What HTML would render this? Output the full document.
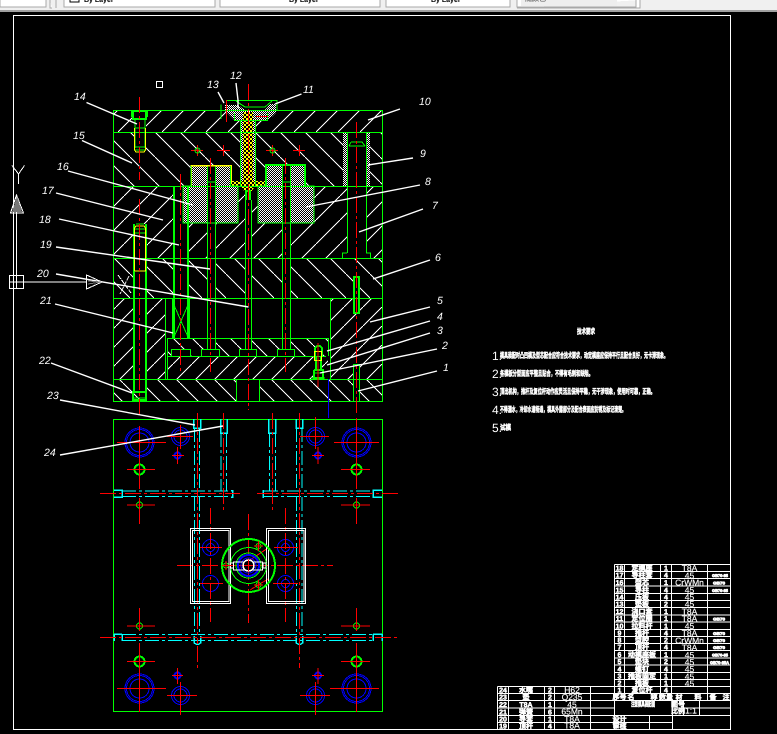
<!DOCTYPE html>
<html><head><meta charset="utf-8"><style>
html,body{margin:0;padding:0;background:#000;width:777px;height:734px;overflow:hidden}
svg{display:block}
.g{fill:none;stroke:#0f0;stroke-width:1}
.G{fill:none;stroke:#0f0;stroke-width:2}
.y{fill:none;stroke:#ff0;stroke-width:1}
.w{fill:none;stroke:#fff;stroke-width:1}
.W{fill:none;stroke:#fff;stroke-width:1.4;shape-rendering:auto}
.r{fill:none;stroke:#f00;stroke-width:1;stroke-dasharray:16 3 3 3}
.rs{fill:none;stroke:#f00;stroke-width:1}
.b{fill:none;stroke:#00f;stroke-width:1}
.c{fill:none;stroke:#0ff;stroke-width:1;stroke-dasharray:14 3 3 3}
.cs{fill:none;stroke:#0ff;stroke-width:1.5}
text{fill:#fff;text-rendering:geometricPrecision}
.n{font:italic 10.5px "Liberation Sans",sans-serif}
.t{font:bold 7px "Liberation Sans","Noto Sans CJK SC",sans-serif;stroke:#fff;stroke-width:.5;text-anchor:middle}
.m{font:8.5px "Liberation Sans",sans-serif;text-anchor:middle;stroke:#fff;stroke-width:.15}
.s{font:bold 4px "Liberation Sans",sans-serif;stroke:#fff;stroke-width:.7}
.p{font:bold 7.5px "Liberation Sans","Noto Sans CJK SC",sans-serif;stroke:#fff;stroke-width:.5}
.d{font:12px "Liberation Sans",sans-serif}
.tb{font:bold 7px "Liberation Sans",sans-serif;fill:#000}
</style></head><body>
<svg width="777" height="734" viewBox="0 0 777 734" xmlns="http://www.w3.org/2000/svg" shape-rendering="crispEdges">
<defs>
<pattern id="a" width="22" height="22" patternUnits="userSpaceOnUse" x="8" y="0"><path d="M0 22L22 0" stroke="#fff" fill="none"/></pattern>
<pattern id="b" width="25" height="25" patternUnits="userSpaceOnUse" x="5" y="7"><path d="M0 0L25 25" stroke="#fff" fill="none"/></pattern>
<pattern id="c" width="24" height="24" patternUnits="userSpaceOnUse" x="4" y="4"><path d="M0 24L24 0" stroke="#fff" fill="none"/></pattern>
<pattern id="d" width="24" height="24" patternUnits="userSpaceOnUse" x="10" y="10"><path d="M0 0L24 24" stroke="#fff" fill="none"/></pattern>
<pattern id="e" width="19" height="19" patternUnits="userSpaceOnUse" x="2" y="3"><path d="M0 19L19 0" stroke="#fff" fill="none"/></pattern>
<pattern id="f" width="19" height="19" patternUnits="userSpaceOnUse" x="9" y="3"><path d="M0 0L19 19" stroke="#fff" fill="none"/></pattern>
<pattern id="st" width="2" height="2" patternUnits="userSpaceOnUse"><rect width="2" height="2" fill="#000"/><rect width="1" height="1" fill="#fff"/><rect x="1" y="1" width="1" height="1" fill="#fff"/></pattern>
<pattern id="sy" width="4" height="4" patternUnits="userSpaceOnUse"><rect width="4" height="4" fill="#000"/><rect width="2" height="2" fill="#ff0"/><rect x="2" y="2" width="2" height="2" fill="#ff0"/></pattern>
</defs>
<rect width="777" height="734" fill="#000"/>
<!-- top toolbar -->
<rect width="777" height="10" fill="#f0f0f0"/><rect y="10" width="777" height="2" fill="#a0a0a0"/>
<path d="M0 0V7H46V0M50 0V8H52M56 0V8M64 0V7H215V0M220 0V7H380V0M386 0V7H510V0M517 0V7H636V0M640 0V8H517" fill="#fff" stroke="#a8a8a8"/>
<rect x="521" y="0" width="96" height="6" fill="#eee"/>
<rect x="70" y="-3" width="9" height="5" fill="#fff" stroke="#000"/>
<text class="tb" x="84" y="2">By Layer</text><text class="tb" x="289" y="2">By Layer</text><text class="tb" x="431" y="2">By Layer</text><text class="tb" x="525" y="1" style="fill:#777">随颜色</text>
<!-- frame -->
<path class="w" d="M730.5 15.5H13.5V729.5H730.5Z"/>
<!-- hatches section -->
<rect x="114" y="111" width="268" height="21" fill="url(#a)"/>
<rect x="114" y="133" width="268" height="53" fill="url(#b)"/>
<rect x="114" y="187" width="268" height="71" fill="url(#c)"/>
<rect x="114" y="259" width="268" height="39" fill="url(#d)"/>
<rect x="114" y="299" width="52" height="80" fill="url(#e)"/>
<rect x="330" y="299" width="52" height="80" fill="url(#e)"/>
<rect x="168" y="339" width="160" height="17" fill="url(#f)"/>
<rect x="168" y="357" width="160" height="22" fill="url(#e)"/>
<rect x="114" y="380" width="268" height="21" fill="url(#f)"/>
<!-- voids -->
<g fill="#000">
<rect x="134" y="111" width="12" height="40"/><rect x="134" y="224" width="12" height="168"/>
<rect x="174" y="186" width="14" height="152"/><rect x="207" y="165" width="8" height="184"/>
<rect x="245" y="186" width="6" height="164"/><rect x="282" y="165" width="8" height="184"/>
<rect x="347" y="133" width="19" height="125"/>
<rect x="188" y="299" width="142" height="39"/>
<rect x="172" y="349" width="19" height="7"/><rect x="201" y="349" width="19" height="7"/><rect x="239" y="349" width="18" height="7"/><rect x="277" y="349" width="18" height="7"/>
<rect x="237" y="380" width="23" height="21"/>
<rect x="354" y="277" width="6" height="36"/><rect x="354" y="364" width="6" height="37"/>
<rect x="315" y="346" width="7" height="32"/>
</g>
<!-- inserts stipple -->
<path d="M191 165H231V186H238V223H183V186H191Z" fill="url(#st)"/>
<path d="M266 165H305V186H314V223H258V186H266Z" fill="url(#st)"/>
<rect x="207" y="165" width="8" height="58" fill="#000"/><rect x="282" y="165" width="8" height="58" fill="#000"/>
<rect x="343" y="133" width="4" height="53" fill="url(#st)"/><rect x="366" y="133" width="4" height="53" fill="url(#st)"/>
<!-- sprue -->
<rect x="240" y="120" width="16" height="66" fill="url(#st)"/>
<path d="M225 105H238L245 110H265L270 104H276V113L268 120H234L225 111Z" fill="url(#st)"/>
<rect x="243" y="112" width="10" height="70" fill="url(#sy)"/>
<path d="M230 181H244V176H253V181H266V186H255L252 191H244L241 186H230Z" fill="url(#sy)"/>
<!-- green structure -->
<rect class="g" x="113.5" y="110.5" width="269" height="291"/>
<path class="g" d="M113 132.5H382M113 186.5H382M113 258.5H382M113 298.5H382M113 379.5H382M168 338.5H328M168 356.5H326M165.5 298V379M167.5 338V379M330.5 298V379M328.5 338V356"/>
<path class="G" d="M174 186V338M188 186V338M134 224V392M146 224V392"/>
<path class="g" d="M207.5 165V349M215.5 165V349M245.5 200V349M251.5 200V349M282.5 165V349M290.5 165V349M347.5 133V253M366.5 133V253M342.5 258V253H347M370.5 258V253H366M349 146H365M351 142H362L365 146M349 146L351 142"/>
<path class="g" d="M240.5 120V186M255.5 120V186M234.5 113V120.5H267.5V113M221 104.5V119M226 100.5H277V110M236 101L245 107H265L272 101"/>
<path class="G" d="M246 200V190M250 200V190M246 191H251"/>
<path class="g" d="M172.5 298.5V338M189.5 298.5V338M174 305L188 337M188 305L174 337"/>
<rect class="g" x="171.5" y="349.5" width="19" height="7"/><rect class="g" x="201.5" y="349.5" width="18" height="7"/><rect class="g" x="239.5" y="349.5" width="17" height="7"/><rect class="g" x="277.5" y="349.5" width="17" height="7"/>
<rect class="g" x="236.5" y="379.5" width="23" height="22"/>
<rect class="G" x="354" y="277" width="5" height="36"/><rect class="g" x="353.5" y="364.5" width="6" height="37"/>
<!-- bolts -->
<path class="G" d="M133 111H146V119H133Z"/><path class="g" d="M131.5 111V117M147.5 111V117M135 120V128H145V120M135 128V148M145 128V148M135 147H145M135 150H145"/>
<path class="y" d="M134.5 128V150L136 152H144L145.5 150V128"/>
<path class="y" d="M134.5 271V228L136 226H144L145.5 228V271H134.5"/>
<path class="g" d="M135 233H145M135 229H145M136 224H144"/>
<path class="G" d="M133 392H146V400H133Z"/>
<path class="g" d="M132 398H147"/>
<path class="G" d="M315 356V348L317 346H320L322 348V356M314 370V378H323V370H314M316 356V370M321 356V370"/>
<rect class="y" x="314.5" y="351.5" width="7" height="9"/>
<path class="g" d="M311 378H325M314 373H323"/>
<!-- insert outlines -->
<path class="G" d="M266 186V165H305V186"/>
<path class="g" d="M191 186H183V223H238V186H231M258 186V223H314V186H305M266 186H258"/>
<path class="y" d="M191 186V165.5H231V182" style="stroke-width:1.5"/>
<path class="g" d="M191 186V166M230.5 166V186M207 182H215M282 182H290"/>
<!-- section red -->
<path class="r" d="M139.5 97V180M139.5 199V418M180.5 174V372M210.5 158V372M248.5 84V410M285.5 158V372M356.5 122V413"/>
<path class="rs" d="M318 343V387M226.5 100V122M256 116.5H268M191 150.5H203M197.5 145V156M217 150.5H230M223.5 145V156M266 150.5H278M272.5 145V156M293 150.5H305M299.5 145V156"/>
<circle class="g" cx="197.5" cy="150.5" r="2.5"/><circle class="g" cx="272.5" cy="150.5" r="2.5"/>
<path d="M328.5 379V418" stroke="#00f" fill="none"/>
<!-- plan view -->
<rect class="g" x="113.5" y="419.5" width="269" height="292"/>
<g class="b">
<circle cx="139.5" cy="442.5" r="14.5"/><circle cx="139.5" cy="442.5" r="13"/><circle cx="139.5" cy="442.5" r="9.5"/>
<circle cx="356.5" cy="442.5" r="14.5"/><circle cx="356.5" cy="442.5" r="13"/><circle cx="356.5" cy="442.5" r="9.5"/>
<circle cx="139.5" cy="688.5" r="14.5"/><circle cx="139.5" cy="688.5" r="13"/><circle cx="139.5" cy="688.5" r="9.5"/>
<circle cx="356.5" cy="688.5" r="14.5"/><circle cx="356.5" cy="688.5" r="13"/><circle cx="356.5" cy="688.5" r="9.5"/>
<circle cx="180.5" cy="436.5" r="9"/><circle cx="180.5" cy="436.5" r="6.5"/><circle cx="315.5" cy="436.5" r="9"/><circle cx="315.5" cy="436.5" r="6.5"/>
<circle cx="180.5" cy="695.5" r="9"/><circle cx="180.5" cy="695.5" r="6.5"/><circle cx="315.5" cy="695.5" r="9"/><circle cx="315.5" cy="695.5" r="6.5"/>
<circle cx="210.5" cy="547.5" r="8"/><circle cx="210.5" cy="547.5" r="4"/><circle cx="285.5" cy="547.5" r="8"/><circle cx="285.5" cy="547.5" r="4"/>
<circle cx="210.5" cy="583.5" r="8"/><circle cx="285.5" cy="583.5" r="8"/><circle cx="285.5" cy="583.5" r="4"/>
</g>
<g fill="none" stroke="#00f" stroke-width="2"><circle cx="177.5" cy="455.5" r="3"/><circle cx="318" cy="455.5" r="3"/><circle cx="177.5" cy="675.5" r="3"/><circle cx="318" cy="675.5" r="3"/></g>
<g class="G"><circle cx="139.5" cy="469.5" r="5"/><circle cx="356.5" cy="469.5" r="5"/><circle cx="139.5" cy="661.5" r="5"/><circle cx="356.5" cy="661.5" r="5"/></g>
<g class="g"><circle cx="139.5" cy="505" r="3"/><circle cx="356.5" cy="505" r="3"/><circle cx="139.5" cy="626" r="3"/><circle cx="356.5" cy="626" r="3"/></g>
<!-- cyan -->
<path class="c" d="M122 491H231M122 496.5H231M264 491H373M264 496.5H373M122 634.5H373M122 640.5H373M194.5 428V491M199.5 428V491M194.5 497V634M199.5 497V634M296.5 428V491M302 428V491M296.5 497V634M302 497V634M221 433V491M226.5 433V491M269.5 433V491M275.5 433V491"/>
<path class="cs" d="M114 490H122V497H114M382 490H373V497H382M114 634V641M122 634V641M114 634H122M382 634V641M373 634V641M373 634H382M193.5 419V428H200.5V419M220.5 419V433H227V419M268.5 419V433H275.5V419M296 419V428H302.5V419M231 490.5H232.5V497H231M264 490.5H263V497H264M194 636V643L196 644H199L200.5 643V636M296 636V643L298 644H301L302.5 643V636"/>
<!-- red plan -->
<path class="r" d="M100 493.5H240M257 493.5H400M100 637.5H398M177 565.5H333M197.5 413V644M223.5 413V510M272.5 413V510M299.5 413V668M210.5 508V622M285.5 508V622M248.5 514V623M197.5 646V668"/>
<path class="rs" d="M117 442.5H166M139.5 426V488M334 442.5H379M356.5 418V488M117 688.5H166M139.5 672V712M330 688.5H379M356.5 672V712M167 436.5H193M180.5 425V449M300 436.5H329M315.5 417V449M172 455.5H184M177.5 447V464M312 455.5H324M318 447V464M172 675.5H183M177.5 668V684M312 675.5H324M318 668V684M167 695.5H197M180.5 682V715M300 695.5H330M315.5 682V715M127 469.5H155M139.5 460V489M341 469.5H370M356.5 460V489M127 505H155M139.5 498V524M341 505H370M356.5 498V524M127 626H155M139.5 608V631M341 626H370M356.5 608V631M127 661.5H155M139.5 643V672M341 661.5H370M356.5 643V672M200 547.5H222M274 547.5H298M200 583.5H223M273 583.5H298M250 560L268 548M250 590L268 579"/>
<!-- white insert rects -->
<g class="w" style="stroke-width:1"><rect x="190.5" y="528.5" width="40" height="75"/><rect x="192.5" y="530.5" width="36.5" height="71"/><rect x="266.5" y="528.5" width="39" height="75"/><rect x="268.5" y="530.5" width="35.5" height="71"/></g>
<g fill="none">
<circle cx="248.5" cy="565.5" r="26.5" stroke="#0f0" stroke-width="2"/>
<circle cx="248.5" cy="565.5" r="18" stroke="#0f0"/>
<circle cx="248.5" cy="565.5" r="12.5" stroke="#0f0"/>
<circle cx="248.5" cy="565.5" r="10.5" stroke="#00f" stroke-width="2"/>
<circle cx="248.5" cy="565.5" r="7.5" stroke="#00f"/>
</g>
<rect x="233.5" y="562" width="29" height="8" fill="none" stroke="#fff" stroke-width="1"/>
<rect x="230.5" y="563" width="3" height="5" fill="none" stroke="#fff"/><rect x="263" y="563" width="3" height="5" fill="none" stroke="#fff"/>
<circle cx="248.5" cy="565.5" r="5.5" fill="#000" stroke="#fff" stroke-width="1.5"/>
<circle cx="226" cy="565.5" r="2.5" class="g"/><circle cx="258.5" cy="546" r="2.5" class="g"/><circle cx="258.5" cy="585" r="2.5" class="g"/>
<path class="rs" d="M222 565.5H231M226 561V570M254 546H263M258.5 541V551M254 585H263M258.5 580V590M244 565.5H253M248.5 560V571"/>
<!-- leaders -->
<g class="W">
<path d="M86.5 102.5L137 124M82 140.5L132 163M68 171L193 205M56 193L163 220M59 219L179 245M56 247L210 269M56 274L248.5 307M55 304L173 333M51 363L132 393M60 400L195 425M60 455L223 426"/>
<path d="M301.5 94L275 104M400 109L368 120M413 158L368 165M420 185L306 207M423 209L359 232M430 260L373 279M430 307L370 322M430 321L327 351M430 333L327 365M437 349L320 373M437 371L358 391M218 92L224 103M236 83L238 100L238 108"/>
</g>
<g class="n">
<text x="74" y="100">14</text><text x="73" y="139">15</text><text x="57" y="170">16</text><text x="42" y="194">17</text><text x="39" y="223">18</text><text x="40" y="248">19</text><text x="37" y="277">20</text><text x="40" y="304">21</text><text x="39" y="364">22</text><text x="47" y="399">23</text><text x="44" y="456">24</text>
<text x="207" y="88">13</text><text x="230" y="79">12</text><text x="303" y="93">11</text><text x="419" y="105">10</text><text x="420" y="157">9</text><text x="425" y="185">8</text><text x="432" y="209">7</text><text x="435" y="261">6</text><text x="437" y="304">5</text><text x="437" y="320">4</text><text x="437" y="334">3</text><text x="442" y="349">2</text><text x="443" y="371">1</text>
</g>
<!-- small box -->
<rect class="w" x="156.5" y="81.5" width="6" height="6"/>
<!-- UCS -->
<g class="w">
<path d="M12 165.5L18.5 174L24.5 165.5M18.5 174V184"/>
<path d="M16.5 195L10.5 213H23.5ZM16.5 195V213"/><path d="M17 196L22 212L12 212" fill="#777" stroke="none"/>
<path d="M16.5 213V275"/><rect x="9.5" y="275.5" width="14" height="13"/><path d="M16.5 275V289M9.5 282H24M24 282H86"/>
<path d="M86.5 275L102 282L86.5 289Z"/><path d="M88 281L101 282L88 284" stroke="#777"/>
<path d="M118 275L131 293M129 276L120 294" stroke-dasharray="5 1"/>
</g>
<!-- tech requirements -->
<text class="p" x="577" y="334" textLength="18" lengthAdjust="spacingAndGlyphs">技术要求</text>
<text class="d" x="492" y="360">1.</text><text class="p" x="500" y="358" textLength="168" lengthAdjust="spacingAndGlyphs">模具装配时凸凹模及型芯配合应符合技术要求，动定模座应保持平行且配合良好，无卡滞现象。</text>
<text class="d" x="492" y="378">2.</text><text class="p" x="500" y="376" textLength="93" lengthAdjust="spacingAndGlyphs">各模板分型面应平整且贴合，不得有毛刺和缺陷。</text>
<text class="d" x="492" y="396">3.</text><text class="p" x="500" y="394" textLength="155" lengthAdjust="spacingAndGlyphs">顶出机构，推杆及复位杆动作应灵活且保持平稳，无干涉现象，使用时可靠，正确。</text>
<text class="d" x="492" y="414">4.</text><text class="p" x="500" y="412" textLength="126" lengthAdjust="spacingAndGlyphs">不得漏水，冷却水道畅通，模具外露部分及配合表面应防锈及标记清楚。</text>
<text class="d" x="492" y="432">5.</text><text class="p" x="500" y="430" textLength="11" lengthAdjust="spacingAndGlyphs">试模</text>
<!-- title tables -->
<path class="w" d="M614.5 564.5H730.5M614.5 571.5H730.5M614.5 578.5H730.5M614.5 586H730.5M614.5 593.5H730.5M614.5 600.5H730.5M614.5 607.5H730.5M614.5 615H730.5M614.5 622H730.5M614.5 629.5H730.5M614.5 636.5H730.5M614.5 643.5H730.5M614.5 650.5H730.5M614.5 658H730.5M614.5 665H730.5M614.5 672.5H730.5M614.5 679.5H730.5M497.5 686.5H730.5M497.5 693.5H730.5M497.5 700.5H730.5M497.5 708H614M672.5 708H730.5M497.5 715.5H730.5M497.5 722.5H672.5M614.5 564.5V729M624.5 564.5V700M660.5 564.5V700M671.5 564.5V693M707.5 564.5V700M497.5 686.5V729M508.5 686.5V729M544.5 686.5V729M554.5 686.5V729M590.5 686.5V729M624.5 715V729M649.5 715V729M672.5 700V729M683.5 700V715M699.5 700V715"/>
<g class="t" transform="translate(0,.5)">
<text x="619.5" y="570">18</text><text x="642" y="570">定模座</text><text x="666" y="570">1</text>
<text x="619.5" y="577">17</text><text x="642" y="577">导柱套</text><text x="666" y="577">4</text>
<text x="619.5" y="584.5">16</text><text x="642" y="584.5">型芯</text><text x="666" y="584.5">1</text>
<text x="619.5" y="592">15</text><text x="642" y="592">导柱</text><text x="666" y="592">4</text>
<text x="619.5" y="599">14</text><text x="642" y="599">压板</text><text x="666" y="599">4</text>
<text x="619.5" y="606">13</text><text x="642" y="606">垫板</text><text x="666" y="606">2</text>
<text x="619.5" y="613.5">12</text><text x="642" y="613.5">浇口套</text><text x="666" y="613.5">1</text>
<text x="619.5" y="620.5">11</text><text x="642" y="620.5">定位圈</text><text x="666" y="620.5">1</text>
<text x="619.5" y="628">10</text><text x="642" y="628">拉料杆</text><text x="666" y="628">1</text>
<text x="619.5" y="635">9</text><text x="642" y="635">推杆</text><text x="666" y="635">4</text>
<text x="619.5" y="642">8</text><text x="642" y="642">型腔</text><text x="666" y="642">2</text>
<text x="619.5" y="649">7</text><text x="642" y="649">顶杆</text><text x="666" y="649">4</text>
<text x="619.5" y="656.5">6</text><text x="642" y="656.5">动模座板</text><text x="666" y="656.5">1</text>
<text x="619.5" y="663.5">5</text><text x="642" y="663.5">垫块</text><text x="666" y="663.5">2</text>
<text x="619.5" y="671">4</text><text x="642" y="671">螺钉</text><text x="666" y="671">4</text>
<text x="619.5" y="678">3</text><text x="642" y="678">推板固定</text><text x="666" y="678">1</text>
<text x="619.5" y="685">2</text><text x="642" y="685">推板</text><text x="666" y="685">1</text>
<text x="619.5" y="692">1</text><text x="642" y="692">复位杆</text><text x="666" y="692">4</text>
<text x="619.5" y="699">序号</text><text x="631" y="699">名</text><text x="654" y="699">称</text><text x="666" y="699">数量</text><text x="679" y="699">材</text><text x="698" y="699">料</text><text x="713" y="699">备</text><text x="726" y="699">注</text>
<text x="503" y="692">24</text><text x="526" y="692">水嘴</text><text x="550" y="692">2</text>
<text x="503" y="699">23</text><text x="526" y="699">垫</text><text x="550" y="699">2</text>
<text x="503" y="706.5">22</text><text x="526" y="706.5">T8A</text><text x="550" y="706.5">1</text>
<text x="503" y="714">21</text><text x="526" y="714">弹簧</text><text x="550" y="714">6</text>
<text x="503" y="721">20</text><text x="526" y="721">导套</text><text x="550" y="721">1</text>
<text x="503" y="728">19</text><text x="526" y="728">顶杆</text><text x="550" y="728">4</text>
<text x="643" y="706" textLength="24" lengthAdjust="spacingAndGlyphs">注塑模具装配图</text>
<text x="678" y="706">图号</text><text x="678" y="713">比例</text>
<text x="619.5" y="721">设计</text><text x="619.5" y="728">审核</text>
</g>
<g class="m" transform="translate(0,.5)">
<text x="689.5" y="570.5">T8A</text><text x="689.5" y="578">45</text><text x="689.5" y="585">CrWMn</text><text x="689.5" y="592.5">45</text><text x="689.5" y="599.5">45</text><text x="689.5" y="606.5">45</text><text x="689.5" y="614">T8A</text><text x="689.5" y="621">T8A</text><text x="689.5" y="628.5">45</text><text x="689.5" y="635.5">T8A</text><text x="689.5" y="643">CrWMn</text><text x="689.5" y="650">T8A</text><text x="689.5" y="657.5">45</text><text x="689.5" y="664.5">45</text><text x="689.5" y="671.5">45</text><text x="689.5" y="679">45</text><text x="689.5" y="686">45</text>
<text x="572" y="692.5">H62</text><text x="572" y="699.5">Q235</text><text x="572" y="707">45</text><text x="572" y="714">65Mn</text><text x="572" y="721.5">T8A</text><text x="572" y="728">T8A</text>
<text x="691" y="713">1:1</text>
</g>
<g class="s">
<text x="712" y="577" textLength="16" lengthAdjust="spacingAndGlyphs">GB70-85</text><text x="713" y="584.5" textLength="12" lengthAdjust="spacingAndGlyphs">GB70</text><text x="712" y="592" textLength="16" lengthAdjust="spacingAndGlyphs">GB70-85</text><text x="713" y="620.5" textLength="12" lengthAdjust="spacingAndGlyphs">GB70</text><text x="713" y="635" textLength="12" lengthAdjust="spacingAndGlyphs">GB70</text><text x="713" y="642" textLength="12" lengthAdjust="spacingAndGlyphs">GB70</text><text x="713" y="649" textLength="12" lengthAdjust="spacingAndGlyphs">GB70</text><text x="712" y="656.5" textLength="16" lengthAdjust="spacingAndGlyphs">GB70-85</text><text x="710" y="664" textLength="19" lengthAdjust="spacingAndGlyphs">GB70-85A</text>
</g>
</svg>
</body></html>
